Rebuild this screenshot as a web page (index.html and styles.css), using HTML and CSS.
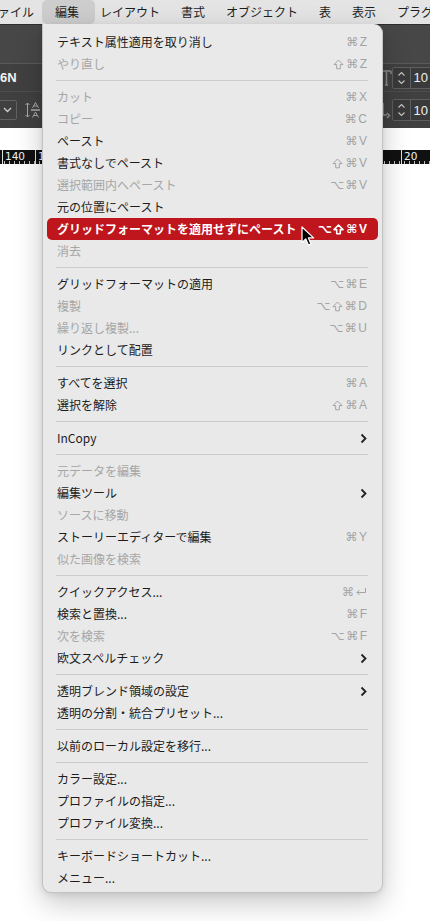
FILE: index.html
```html
<!DOCTYPE html>
<html lang="ja">
<head>
<meta charset="utf-8">
<title>編集メニュー</title>
<link rel="stylesheet" href="styles.css">
</head>
<body>
<div class="screen">
  <div class="menubar">
    <span class="mb-item first">ファイル</span>
    <span class="mb-item active">編集</span>
    <span class="mb-item">レイアウト</span>
    <span class="mb-item">書式</span>
    <span class="mb-item">オブジェクト</span>
    <span class="mb-item">表</span>
    <span class="mb-item">表示</span>
    <span class="mb-item">プラグ</span>
  </div>

  <div class="toolbar">
    <div class="tb-top"></div>
    <div class="tb-row tb-mid">
      <span class="tb-label">6N</span>
      <div class="tb-right">
        <svg class="tb-icon" width="10" height="18" viewBox="0 0 10 18"><path d="M0 2h9M4.5 2v14M3 16h3M0 2v3M9 2v3" stroke="#8a8a8a" stroke-width="1.6" fill="none"/></svg>
        <div class="field">
          <span class="spin"><svg width="9" height="16" viewBox="0 0 9 16"><path d="M1.5 5.5l3-3 3 3M1.5 10.5l3 3 3-3" stroke="#c8c8c8" stroke-width="1.1" fill="none"/></svg></span>
          <span class="val">10</span>
        </div>
      </div>
    </div>
    <div class="tb-row tb-bot">
      <div class="tb-left">
        <span class="dd"><svg width="9" height="6" viewBox="0 0 9 6"><path d="M1 1l3.5 3.5L8 1" stroke="#cfcfcf" stroke-width="1.3" fill="none"/></svg></span>
        <svg class="ls-icon" width="16" height="18" viewBox="0 0 16 18"><path d="M2.5 2v14M0.5 4l2-2 2 2M0.5 14l2 2 2-2" stroke="#a8a8a8" stroke-width="1" fill="none"/><path d="M6 8.5h9M6 9.5h9" stroke="#a8a8a8" stroke-width="0.8"/><path d="M7.5 7l3-5.5 3 5.5M8.6 5h3.8M7.5 16.5l3-5.5 3 5.5M8.6 14.5h3.8" stroke="#a8a8a8" stroke-width="1" fill="none"/></svg>
      </div>
      <div class="tb-right">
        <svg class="tb-icon" width="10" height="18" viewBox="0 0 10 18"><path d="M1 2v12M1 14h4M5 12l2.5 2.5L5 17" stroke="#8a8a8a" stroke-width="1.6" fill="none"/></svg>
        <div class="field">
          <span class="spin"><svg width="9" height="16" viewBox="0 0 9 16"><path d="M1.5 5.5l3-3 3 3M1.5 10.5l3 3 3-3" stroke="#c8c8c8" stroke-width="1.1" fill="none"/></svg></span>
          <span class="val">10</span>
        </div>
      </div>
    </div>
  </div>

  <div class="canvas">
    <div class="ruler">
      <div class="rl-left"><span class="rl-mark">140</span><span class="rl-mark">1</span></div>
      <div class="rl-right"><span class="rl-mark">20</span></div>
    </div>
  </div>

  <div class="menu">
    <div class="mi"><span class="lbl">テキスト属性適用を取り消し</span><span class="sc">⌘Z</span></div>
    <div class="mi dis"><span class="lbl">やり直し</span><span class="sc"><svg class="shift" width="11" height="11" viewBox="0 0 11 11"><path d="M5.5 1L10 5.6H7.3V9.8H3.7V5.6H1z" stroke="currentColor" stroke-width="1" fill="none" stroke-linejoin="round"/></svg>⌘Z</span></div>
    <div class="sep"></div>
    <div class="mi dis"><span class="lbl">カット</span><span class="sc">⌘X</span></div>
    <div class="mi dis"><span class="lbl">コピー</span><span class="sc">⌘C</span></div>
    <div class="mi"><span class="lbl">ペースト</span><span class="sc">⌘V</span></div>
    <div class="mi"><span class="lbl">書式なしでペースト</span><span class="sc"><svg class="shift" width="11" height="11" viewBox="0 0 11 11"><path d="M5.5 1L10 5.6H7.3V9.8H3.7V5.6H1z" stroke="currentColor" stroke-width="1" fill="none" stroke-linejoin="round"/></svg>⌘V</span></div>
    <div class="mi dis"><span class="lbl">選択範囲内へペースト</span><span class="sc">⌥⌘V</span></div>
    <div class="mi"><span class="lbl">元の位置にペースト</span></div>
    <div class="mi hl"><span class="lbl">グリッドフォーマットを適用せずにペースト</span><span class="sc">⌥<svg class="shift" width="11" height="11" viewBox="0 0 11 11"><path d="M5.5 1L10 5.6H7.3V9.8H3.7V5.6H1z" stroke="currentColor" stroke-width="1.6" fill="none" stroke-linejoin="round"/></svg>⌘V</span></div>
    <div class="mi dis"><span class="lbl">消去</span></div>
    <div class="sep"></div>
    <div class="mi"><span class="lbl">グリッドフォーマットの適用</span><span class="sc">⌥⌘E</span></div>
    <div class="mi dis"><span class="lbl">複製</span><span class="sc">⌥<svg class="shift" width="11" height="11" viewBox="0 0 11 11"><path d="M5.5 1L10 5.6H7.3V9.8H3.7V5.6H1z" stroke="currentColor" stroke-width="1" fill="none" stroke-linejoin="round"/></svg>⌘D</span></div>
    <div class="mi dis"><span class="lbl">繰り返し複製...</span><span class="sc">⌥⌘U</span></div>
    <div class="mi"><span class="lbl">リンクとして配置</span></div>
    <div class="sep"></div>
    <div class="mi"><span class="lbl">すべてを選択</span><span class="sc">⌘A</span></div>
    <div class="mi"><span class="lbl">選択を解除</span><span class="sc"><svg class="shift" width="11" height="11" viewBox="0 0 11 11"><path d="M5.5 1L10 5.6H7.3V9.8H3.7V5.6H1z" stroke="currentColor" stroke-width="1" fill="none" stroke-linejoin="round"/></svg>⌘A</span></div>
    <div class="sep"></div>
    <div class="mi"><span class="lbl">InCopy</span><svg class="chev" width="7" height="11" viewBox="0 0 7 11"><path d="M1.5 1.5l4 4-4 4" stroke="#222" stroke-width="1.8" fill="none"/></svg></div>
    <div class="sep"></div>
    <div class="mi dis"><span class="lbl">元データを編集</span></div>
    <div class="mi"><span class="lbl">編集ツール</span><svg class="chev" width="7" height="11" viewBox="0 0 7 11"><path d="M1.5 1.5l4 4-4 4" stroke="#222" stroke-width="1.8" fill="none"/></svg></div>
    <div class="mi dis"><span class="lbl">ソースに移動</span></div>
    <div class="mi"><span class="lbl">ストーリーエディターで編集</span><span class="sc">⌘Y</span></div>
    <div class="mi dis"><span class="lbl">似た画像を検索</span></div>
    <div class="sep"></div>
    <div class="mi"><span class="lbl">クイックアクセス...</span><span class="sc sc-ret">⌘<svg class="ret" width="12" height="10" viewBox="0 0 12 10"><path d="M10.5 1v4.5H2M4.5 3L2 5.5 4.5 8" stroke="currentColor" stroke-width="1" fill="none"/></svg></span></div>
    <div class="mi"><span class="lbl">検索と置換...</span><span class="sc">⌘F</span></div>
    <div class="mi dis"><span class="lbl">次を検索</span><span class="sc">⌥⌘F</span></div>
    <div class="mi"><span class="lbl">欧文スペルチェック</span><svg class="chev" width="7" height="11" viewBox="0 0 7 11"><path d="M1.5 1.5l4 4-4 4" stroke="#222" stroke-width="1.8" fill="none"/></svg></div>
    <div class="sep"></div>
    <div class="mi"><span class="lbl">透明ブレンド領域の設定</span><svg class="chev" width="7" height="11" viewBox="0 0 7 11"><path d="M1.5 1.5l4 4-4 4" stroke="#222" stroke-width="1.8" fill="none"/></svg></div>
    <div class="mi"><span class="lbl">透明の分割・統合プリセット...</span></div>
    <div class="sep"></div>
    <div class="mi"><span class="lbl">以前のローカル設定を移行...</span></div>
    <div class="sep"></div>
    <div class="mi"><span class="lbl">カラー設定...</span></div>
    <div class="mi"><span class="lbl">プロファイルの指定...</span></div>
    <div class="mi"><span class="lbl">プロファイル変換...</span></div>
    <div class="sep"></div>
    <div class="mi"><span class="lbl">キーボードショートカット...</span></div>
    <div class="mi"><span class="lbl">メニュー...</span></div>
  </div>

  <svg class="cursor" width="14" height="21" viewBox="0 0 14 21"><path d="M1 1v15.5l3.8-3.6 2.6 6.1 2.6-1.1-2.6-6h5.2z" fill="#000" stroke="#fff" stroke-width="1.2" stroke-linejoin="round"/></svg>
</div>
</body>
</html>
```

FILE: styles.css
```css
* { box-sizing: border-box; }
html, body { margin: 0; padding: 0; }
body {
  background: #ffffff;
  font-family: "Noto Sans CJK JP", "Noto Sans", sans-serif;
  width: 430px;
  height: 921px;
  overflow: hidden;
}
.screen {
  position: relative;
  width: 430px;
  height: 921px;
  overflow: hidden;
  background: #ffffff;
}

/* menu bar */
.menubar {
  height: 24px;
  background: #e4e4e4;
  display: flex;
  align-items: center;
  gap: 21px;
  font-size: 12px;
  color: #1e1e1e;
  white-space: nowrap;
}
.mb-item { position: relative; line-height: 22px; }
.mb-item.first { margin-left: -14px; }
.mb-item.active::before {
  content: "";
  position: absolute;
  left: -13px;
  right: -16px;
  top: -1px;
  bottom: -1px;
  background: #cdcdcd;
  border-radius: 5px;
  z-index: -1;
}
.mb-item.active { z-index: 0; }

/* toolbar */
.toolbar {
  height: 104px;
  background: #404040;
  border-top: 1px solid #2e2e2e;
  display: flex;
  flex-direction: column;
}
.tb-top {
  height: 39px;
  background: #474747;
  border-bottom: 1px solid #5a5a5a;
}
.tb-row {
  display: flex;
  align-items: center;
  justify-content: space-between;
  overflow: hidden;
}
.tb-mid { height: 28px; border-bottom: 1px solid #4d4d4d; }
.tb-bot { flex: 1; }
.tb-label {
  color: #f2f2f2;
  font-family: "Liberation Sans", sans-serif;
  font-weight: bold;
  font-size: 13px;
}
.tb-left { display: flex; align-items: center; gap: 8px; margin-left: -4px; }
.dd {
  width: 21px;
  height: 20px;
  border: 1px solid #626262;
  border-radius: 2px;
  display: flex;
  align-items: center;
  justify-content: center;
  padding-left: 2px;
}
.tb-right {
  display: flex;
  align-items: center;
  gap: 0;
  margin-right: -19px;
}
.field {
  display: flex;
  align-items: center;
  height: 22px;
  border: 1px solid #5e5e5e;
  border-radius: 2px;
  background: #3a3a3a;
}
.spin {
  width: 18px;
  height: 100%;
  display: flex;
  align-items: center;
  justify-content: center;
  border-right: 1px solid #5e5e5e;
}
.val {
  color: #f0f0f0;
  font-family: "Liberation Sans", sans-serif;
  font-size: 13px;
  padding: 0 20px 0 3px;
}

/* canvas + ruler */
.canvas {
  height: 700px;
  background: #ffffff;
  padding-top: 22px;
}
.ruler {
  height: 14px;
  background:
    repeating-linear-gradient(90deg, transparent 0 4px, #bdbdbd 4px 5px) bottom / 100% 3px no-repeat,
    #111;
  display: flex;
  justify-content: space-between;
}
.rl-left, .rl-right { display: flex; }
.rl-left { margin-left: 2px; gap: 10px; }
.rl-right { width: 29px; }
.rl-mark {
  color: #f2f2f2;
  font-family: "DejaVu Sans", "Liberation Sans", sans-serif;
  font-size: 10.5px;
  line-height: 12px;
  border-left: 1px solid #e0e0e0;
  padding-left: 2px;
  height: 14px;
}

/* dropdown menu */
.menu {
  position: absolute;
  left: 42px;
  top: 24px;
  width: 341px;
  padding: 7px 4px 3px;
  background: #e9e9e9;
  border: 1px solid #c2c2c2;
  border-top: none;
  border-radius: 0 9px 9px 9px;
  box-shadow: 0 10px 28px rgba(0, 0, 0, 0.22), 0 2px 6px rgba(0, 0, 0, 0.08);
  font-size: 12px;
  color: #1c1c1c;
}
.mi {
  height: 22px;
  display: flex;
  align-items: center;
  justify-content: space-between;
  padding: 0 11px 0 10px;
  border-radius: 5px;
  white-space: nowrap;
}
.mi .lbl { line-height: 22px; }
.mi.dis { color: #a6a6a6; }
.sc {
  display: flex;
  align-items: center;
  font-family: "Liberation Sans", "DejaVu Sans", sans-serif;
  font-size: 12px;
  color: #a3a3a3;
  letter-spacing: 1.5px;
  margin-right: -1.5px;
}
.sc-ret { letter-spacing: 0; margin-right: 0; }
.shift { margin-right: 2px; }
.ret { margin-left: 1px; }
.mi.hl {
  background: #bf151d;
  color: #ffffff;
  font-weight: bold;
}
.mi.hl .sc { color: #ffffff; font-weight: bold; }
.sep {
  height: 1px;
  background: #cccccc;
  margin: 5px 10px 5px 9px;
}

.cursor {
  position: absolute;
  left: 301px;
  top: 226px;
}
```
